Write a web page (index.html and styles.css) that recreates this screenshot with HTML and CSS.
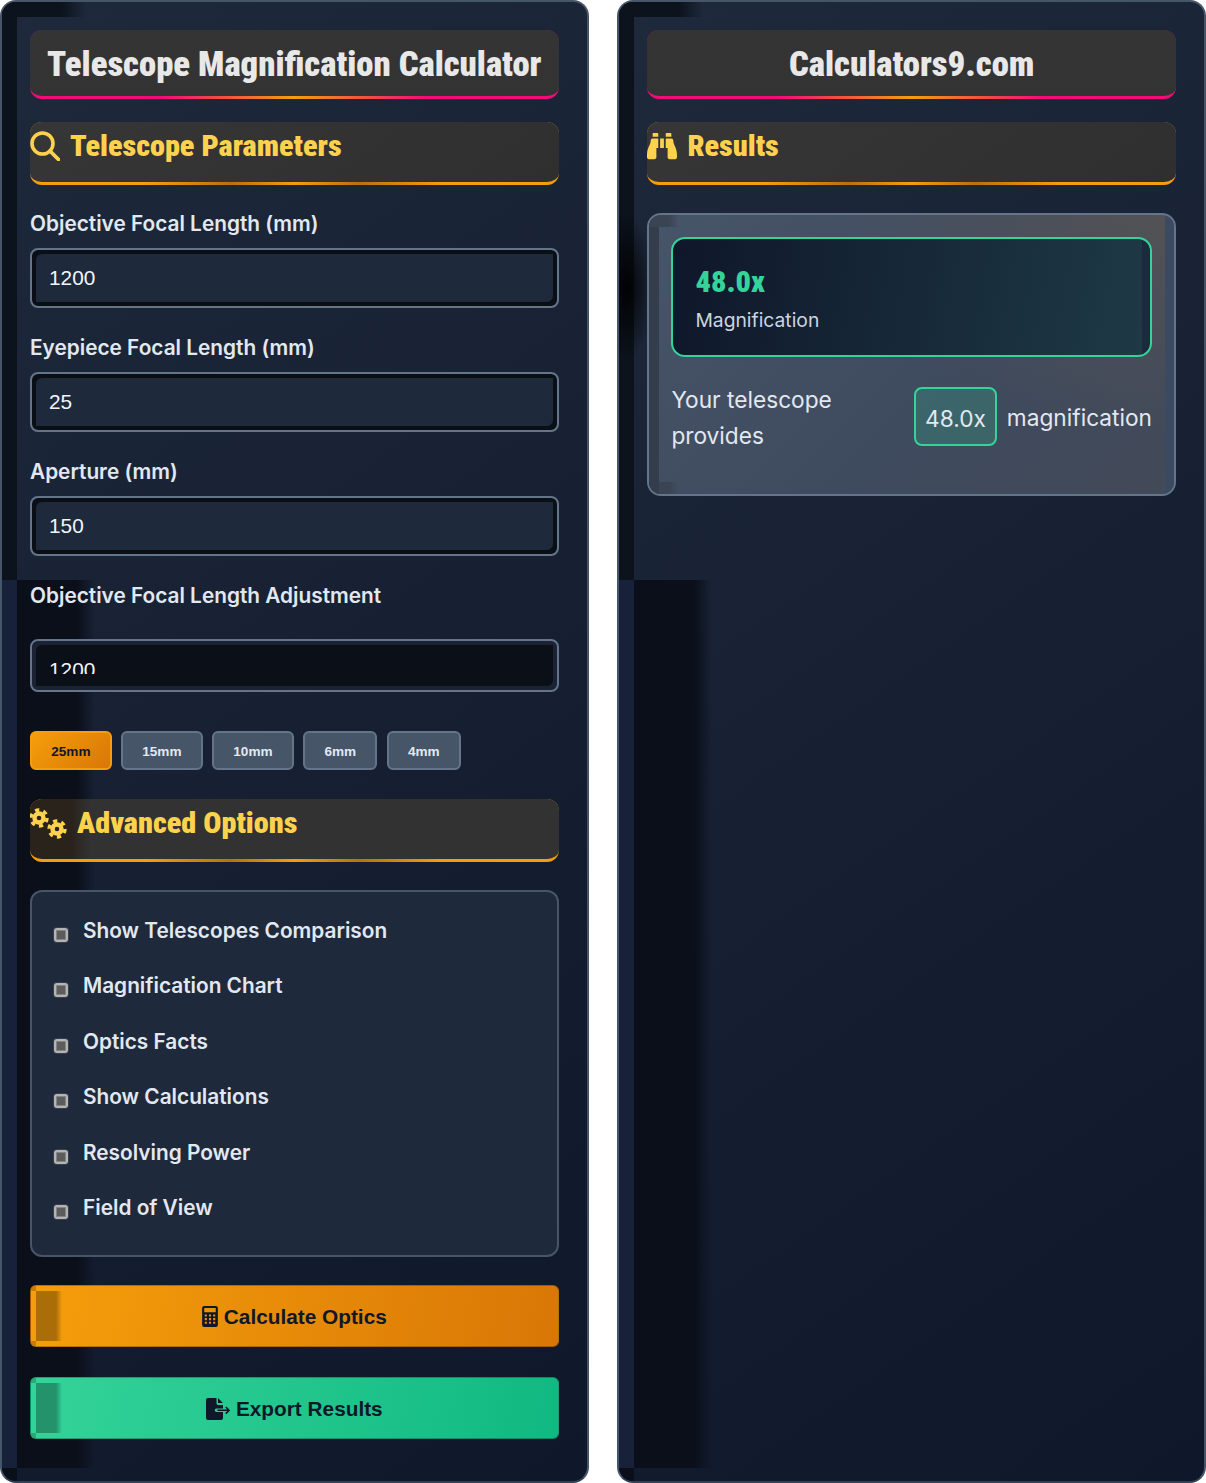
FILE: index.html
```html
<!DOCTYPE html>
<html lang="en">
  <head>
    <meta charset="UTF-8" />
    <title>Telescope Magnification Calculator</title>
    <link rel="stylesheet" href="styles.css">
  </head>
  <body>
    <div class="page">
      <div class="panel">
        <h1 class="title"><span class="cond">Telescope Magnification Calculator</span></h1>
        <h2 class="section-head">
          <svg class="icon" width="30" height="30" viewBox="0 0 30 30"><circle cx="12.5" cy="12.5" r="10.5" fill="none" stroke="currentColor" stroke-width="3.6"/><path d="M20 20l8.5 8.5" stroke="currentColor" stroke-width="3.8" stroke-linecap="round"/></svg>
          <span class="cond">Telescope Parameters</span>
        </h2>

        <div class="field">
          <label class="field-label">Objective Focal Length (mm)</label>
          <div class="text-input">1200</div>
        </div>
        <div class="field">
          <label class="field-label">Eyepiece Focal Length (mm)</label>
          <div class="text-input">25</div>
        </div>
        <div class="field">
          <label class="field-label">Aperture (mm)</label>
          <div class="text-input">150</div>
        </div>
        <label class="field-label range-label">Objective Focal Length Adjustment</label>
        <div class="range-input"><span>1200</span></div>

        <div class="presets">
          <button class="preset active">25mm</button>
          <button class="preset">15mm</button>
          <button class="preset">10mm</button>
          <button class="preset">6mm</button>
          <button class="preset">4mm</button>
        </div>

        <h2 class="section-head dim">
          <svg class="icon" width="37" height="31" viewBox="0 0 37 31">
            <g fill="none" stroke="currentColor">
              <circle cx="9" cy="10" r="4.500" stroke-width="4.400"/>
              <circle cx="9" cy="10" r="8" stroke-width="3.400" stroke-dasharray="4.200 4.180"/>
              <circle cx="27" cy="21" r="4.500" stroke-width="4.400"/>
              <circle cx="27" cy="21" r="8" stroke-width="3.400" stroke-dasharray="4.200 4.180"/>
            </g>
          </svg>
          <span class="cond">Advanced Options</span>
        </h2>

        <div class="options">
          <label class="option"><span class="check"></span>Show Telescopes Comparison</label>
          <label class="option"><span class="check"></span>Magnification Chart</label>
          <label class="option"><span class="check"></span>Optics Facts</label>
          <label class="option"><span class="check"></span>Show Calculations</label>
          <label class="option"><span class="check"></span>Resolving Power</label>
          <label class="option"><span class="check"></span>Field of View</label>
        </div>

        <button class="action calc">
          <svg width="16" height="21" viewBox="0 0 15 20"><path fill-rule="evenodd" fill="currentColor" d="M2 0h11a2 2 0 0 1 2 2v16a2 2 0 0 1-2 2H2a2 2 0 0 1-2-2V2a2 2 0 0 1 2-2zM2 2v4h11V2zM2.500 8v2h2V8zm4 0v2h2V8zm4 0v2h2V8zm-8 3.500v2h2v-2zm4 0v2h2v-2zm4 0v2h2v-2zm-8 3.500v2h2v-2zm4 0v2h2v-2zm4 0v2h2v-2z"/></svg>
          Calculate Optics
        </button>
        <button class="action export">
          <svg width="24" height="22" viewBox="0 0 24 22">
            <path fill="currentColor" d="M2 0h8.500v5.500c0 .8.700 1.500 1.500 1.500h5v3.500h-6.500a1.800 1.800 0 0 0 0 3.600H17V20a2 2 0 0 1-2 2H2a2 2 0 0 1-2-2V2a2 2 0 0 1 2-2zM12 0l5 5h-5z"/>
            <path fill="none" stroke="currentColor" stroke-width="1.600" d="M11.500 12.300h11M19.800 9l3.200 3.300-3.200 3.300"/>
          </svg>
          Export Results
        </button>
      </div>

      <div class="panel">
        <h1 class="title"><span class="cond">Calculators9.com</span></h1>
        <h2 class="section-head">
          <svg class="icon" width="30" height="30" viewBox="0 0 512 512"><path fill="currentColor" d="M416 48c0-8.840-7.160-16-16-16h-64c-8.840 0-16 7.160-16 16v48h96V48zM63.910 159.990C61.400 253.840 3.460 274.220 0 404v44c0 17.670 14.330 32 32 32h96c17.670 0 32-14.330 32-32V288h32V128H95.840c-17.630 0-31.450 14.370-31.930 31.990zm384.180 0c-.48-17.620-14.300-31.990-31.930-31.990H320v160h32v160c0 17.670 14.330 32 32 32h96c17.670 0 32-14.330 32-32v-44c-3.460-129.780-61.400-150.160-63.910-244.010zM176 32h-64c-8.840 0-16 7.160-16 16v48h96V48c0-8.840-7.160-16-16-16zm48 256h64V128h-64v160z"/></svg>
          <span class="cond">Results</span>
        </h2>

        <div class="result-box">
          <div class="result-card">
            <div class="result-value"><span class="cond">48.0x</span></div>
            <div class="result-name">Magnification</div>
          </div>
          <div class="result-line">
            <span class="line-start">Your telescope provides</span>
            <span class="badge">48.0x</span>
            <span>magnification</span>
          </div>
        </div>
      </div>
    </div>
  </body>
</html>
```

FILE: styles.css
```css
* {
  margin: 0;
  padding: 0;
  box-sizing: border-box;
}
body {
  background: #ffffff;
  font-family: Inter, "Liberation Sans", sans-serif;
  color: #e2e8f0;
}
.page {
  display: flex;
  gap: 28.800px;
  height: 1483px;
}
.panel {
  position: relative;
  flex: 1;
  overflow: hidden;
  padding: 28px;
  border: 2px solid #475569;
  border-bottom-color: #334155;
  border-radius: 16px;
  background: linear-gradient(145deg, #1e293b, #0f172a);
}
/* dark rendering bands along the left edge */
.panel::before {
  content: "";
  position: absolute;
  top: 0;
  left: 0;
  right: 0;
  bottom: 0;
  background:
    linear-gradient(90deg, #0c131d 0, #0c131d 60px, rgba(12, 19, 29, 0) 84px) 0 0 / 100px 15px no-repeat,
    linear-gradient(#0c131d, #0c131d) 0 0 / 15px 578px no-repeat,
    linear-gradient(#17223a, #17223a) 0 578px / 15px 888px no-repeat,
    linear-gradient(90deg, #0a0f1a 0, #0a0f1a 60px, rgba(10, 15, 26, 0) 78px) 15px 578px / 90px 888px no-repeat,
    linear-gradient(#0a0f1a, #0a0f1a) 0 1466px / 15px 20px no-repeat;
}
.panel + .panel::before {
  background:
    linear-gradient(90deg, #0c131d 0, #0c131d 60px, rgba(12, 19, 29, 0) 84px) 0 0 / 100px 15px no-repeat,
    radial-gradient(ellipse 26px 75px at 8px 75px, rgba(0, 0, 0, 0.9), rgba(0, 0, 0, 0)) 0 210px / 40px 150px no-repeat,
    linear-gradient(#0c131d, #0c131d) 0 0 / 15px 578px no-repeat,
    linear-gradient(#17223a, #17223a) 0 578px / 15px 888px no-repeat,
    linear-gradient(90deg, #0a0f1a 0, #0a0f1a 60px, rgba(10, 15, 26, 0) 78px) 15px 578px / 90px 888px no-repeat,
    linear-gradient(#0a0f1a, #0a0f1a) 0 1466px / 15px 20px no-repeat;
}
.panel > * {
  position: relative;
}
.cond {
  display: inline-block;
  font-family: "Roboto Condensed", Roboto, sans-serif;
  font-stretch: condensed;
  font-weight: 900;
  white-space: nowrap;
}
.title {
  height: 69px;
  margin-bottom: 23px;
  border-radius: 12px;
  border-bottom: 3px solid transparent;
  background:
    linear-gradient(#343434, #333333) padding-box,
    linear-gradient(90deg, #f20c78, #f20c78 25%, #f59e0b 50%, #f20c78 75%, #f20c78) border-box;
  color: #e8e8e8;
  font-size: 34.700px;
  line-height: 66px;
  text-align: center;
}
.section-head {
  display: flex;
  gap: 10px;
  align-items: flex-start;
  height: 63px;
  margin-bottom: 23px;
  padding-top: 9px;
  border-radius: 12px;
  border-bottom: 3px solid transparent;
  background:
    linear-gradient(145deg, #363636, #2f2f2f) padding-box,
    linear-gradient(90deg, #f59e0b, #f59e0b 22%, #b8720d 38%, #f59e0b 50%, #b8720d 62%, #f59e0b 78%, #f59e0b) border-box;
  color: #ffd24d;
  font-size: 30.200px;
  line-height: 30px;
}
.section-head .icon {
  flex: none;
}
.section-head.dim {
  margin-bottom: 28px;
  background:
    linear-gradient(90deg, #29231c 0, #29231c 42px, #323232 60px) padding-box,
    linear-gradient(90deg, #f59e0b, #f59e0b 22%, #b8720d 38%, #f59e0b 50%, #b8720d 62%, #f59e0b 78%, #f59e0b) border-box;
}
.field {
  margin-bottom: 24px;
}
.field-label {
  display: block;
  margin-bottom: 10px;
  color: #e2e8f0;
  font-size: 20.800px;
  font-weight: 600;
  line-height: 30px;
  transform: translateY(0.5px);
}
.text-input {
  height: 60px;
  padding-left: 17px;
  border: 2px solid #64748b;
  border-radius: 8px;
  background: #1e293b;
  box-shadow: inset 4px 4px 0 #0a0f16, inset -4px -4px 0 #0a0f16;
  color: #f1f5f9;
  font-family: "Liberation Sans", Arial, sans-serif;
  font-size: 20.800px;
  line-height: 56px;
}
.range-label {
  margin-bottom: 29px;
}
.range-input {
  height: 53px;
  margin-bottom: 39px;
  padding-left: 17px;
  border: 2px solid #64748b;
  border-radius: 8px;
  background: #0a0f18;
  box-shadow: inset 4px 4px 0 #1a2233, inset -4px -4px 0 #1a2233;
  color: #f1f5f9;
  font-family: "Liberation Sans", Arial, sans-serif;
  font-size: 20.800px;
  line-height: 57px;
}
.range-input span {
  display: block;
  height: 33px;
  overflow: hidden;
}
.presets {
  display: flex;
  gap: 9.400px;
  margin-bottom: 29px;
}
.preset {
  height: 39px;
  padding: 1px 19.200px 0;
  border: 2px solid #64748b;
  border-radius: 6px;
  background: #475569;
  color: #e2e8f0;
  font-family: "Liberation Sans", Arial, sans-serif;
  font-size: 13.600px;
  font-weight: 700;
}
.preset.active {
  border-color: #f59e0b;
  background: linear-gradient(135deg, #f59e0b, #d97706);
  color: #0f172a;
}
.options {
  display: flex;
  flex-direction: column;
  height: 367px;
  margin-bottom: 28px;
  padding: 10.500px 22px;
  border: 2px solid #475569;
  border-radius: 12px;
  background: #1e293b;
}
.option {
  display: flex;
  align-items: center;
  gap: 15px;
  height: 55.500px;
  color: #e2e8f0;
  font-size: 20.800px;
  font-weight: 600;
}
.check {
  flex: none;
  width: 14px;
  height: 14px;
  margin-top: 9px;
  border: 2px solid #b4b4b4;
  border-radius: 3px;
  background: #5c5c5c;
  box-shadow: 0 0 0 1px rgba(255, 255, 255, 0.1), inset 0 0 0 1px #858585;
}
.action {
  position: relative;
  display: flex;
  align-items: center;
  justify-content: center;
  gap: 6px;
  width: 100%;
  height: 62px;
  overflow: hidden;
  padding-top: 1px;
  border: 1px solid rgba(0, 0, 0, 0.25);
  border-radius: 6px;
  color: #0f172a;
  font-family: "Liberation Sans", Arial, sans-serif;
  font-size: 20.800px;
  font-weight: 700;
}
.action::before {
  content: "";
  position: absolute;
  top: 0;
  bottom: 0;
  left: 0;
  width: 32px;
  background:
    linear-gradient(rgba(0, 0, 0, 0.2), rgba(0, 0, 0, 0.2)) 0 0 / 5px 5px no-repeat,
    linear-gradient(rgba(0, 0, 0, 0.2), rgba(0, 0, 0, 0.2)) 0 100% / 5px 5px no-repeat,
    linear-gradient(90deg, rgba(0, 0, 0, 0.3) 0, rgba(0, 0, 0, 0.3) 20px, rgba(0, 0, 0, 0) 26px) 5px 5px / 26px 50px no-repeat;
}
.calc {
  margin-bottom: 30px;
  background: linear-gradient(100deg, #f59e0b, #d97706);
}
.export {
  background: linear-gradient(100deg, #34d399, #10b981);
}
.result-box {
  position: relative;
  margin-top: 28px;
  padding: 22px 22px 40px;
  overflow: hidden;
  border: 2px solid #64748b;
  border-radius: 14px;
  background:
    radial-gradient(ellipse 340px 220px at 100% 0, rgba(92, 86, 80, 0.7), rgba(92, 86, 80, 0)),
    linear-gradient(135deg, #475569, #3e4a5e 60%, #434a58);
}
.result-box::before {
  content: "";
  position: absolute;
  top: 0;
  left: 0;
  right: 0;
  bottom: 0;
  background:
    linear-gradient(90deg, #3a4452 0, #3a4452 20px, rgba(58, 68, 82, 0) 30px) 0 0 / 40px 12px no-repeat,
    linear-gradient(#333d4b, #333d4b) 0 0 / 10px 100% no-repeat,
    linear-gradient(90deg, #3a4452 0, #3a4452 20px, rgba(58, 68, 82, 0) 30px) 0 bottom / 40px 12px no-repeat,
    linear-gradient(#3b4a60, #3b4a60) right top / 9px 100% no-repeat;
}
.result-box > * {
  position: relative;
}
.result-card {
  height: 120px;
  margin-bottom: 25px;
  padding: 22px;
  border: 2px solid #34d399;
  border-radius: 14px;
  background:
    linear-gradient(#1c2a3b, #1c2a3b) right top / 8px 100% no-repeat,
    linear-gradient(100deg, #0f172a, #1e3a46);
}
.result-value {
  color: #34d399;
  font-size: 30.300px;
  line-height: 40px;
}
.result-name {
  margin-top: 4px;
  color: #cbd5e1;
  font-size: 19.300px;
  line-height: 28px;
}
.result-line {
  display: flex;
  align-items: center;
  gap: 10px;
  color: #e2e8f0;
  font-size: 22.700px;
  line-height: 36px;
}
.line-start {
  flex: 1;
  max-width: 200px;
  margin-right: 33px;
}
.badge {
  padding: 0 9px;
  height: 59px;
  margin-bottom: 3px;
  line-height: 59px;
  border: 2px solid #34d399;
  border-radius: 8px;
  background: rgba(52, 211, 153, 0.2);
}
```
